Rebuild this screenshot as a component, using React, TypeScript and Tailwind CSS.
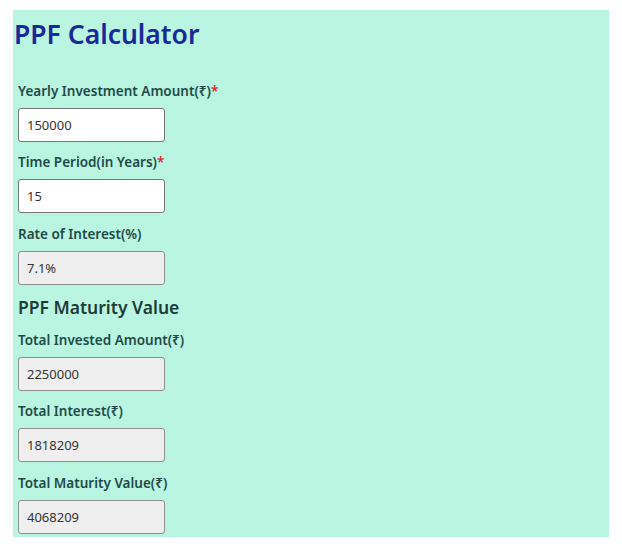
import React from 'react';

const font = { fontFamily: '"Noto Sans", "Open Sans", "DejaVu Sans", sans-serif' };

function Field({ label, value, required, readOnly, extra = '' }: { label: string; value: string; required?: boolean; readOnly?: boolean; extra?: string }) {
  return (
    <div className={`mb-[10px] ${extra}`}>
      <label className="block h-[20px] pl-[5px] text-[13.5px] leading-[20px] font-semibold text-[#1f4a48] mb-[7px]">
        {label}
        {required && <span className="text-[#e3262e]">*</span>}
      </label>
      <input
        className={`ml-[5px] block w-[147px] h-[34px] rounded-[3px] border px-[8px] text-[13px] text-[#333] outline-none ${
          readOnly ? 'bg-[#efefef] border-[#8f8f8f]' : 'bg-white border-[#767676]'
        }`}
        style={font}
        defaultValue={value}
        readOnly={readOnly}
      />
    </div>
  );
}

export default function App() {
  return (
    <div className="min-h-screen bg-white pt-[10px] pl-[13px]" style={font}>
      <div className="w-[596px] bg-[#b9f5e0] pt-[7px] pb-[3px]">
        <h1 className="h-[34px] text-[26.5px] leading-[34px] font-semibold text-[#1a289a] pl-[1px] mb-[30px]">PPF Calculator</h1>

        <Field label="Yearly Investment Amount(₹)" value="150000" required />
        <Field label="Time Period(in Years)" value="15" required />
        <Field label="Rate of Interest(%)" value="7.1%" readOnly extra="pt-[1px]" />

        <h2 className="pl-[5px] text-[17.5px] leading-[24px] font-semibold text-[#1e3b38] mt-[1px] mb-[11px]">PPF Maturity Value</h2>

        <Field label="Total Invested Amount(₹)" value="2250000" readOnly />
        <Field label="Total Interest(₹)" value="1818209" readOnly />
        <div className="-mb-[10px]">
          <Field label="Total Maturity Value(₹)" value="4068209" readOnly extra="pt-[1px]" />
        </div>
      </div>
    </div>
  );
}
